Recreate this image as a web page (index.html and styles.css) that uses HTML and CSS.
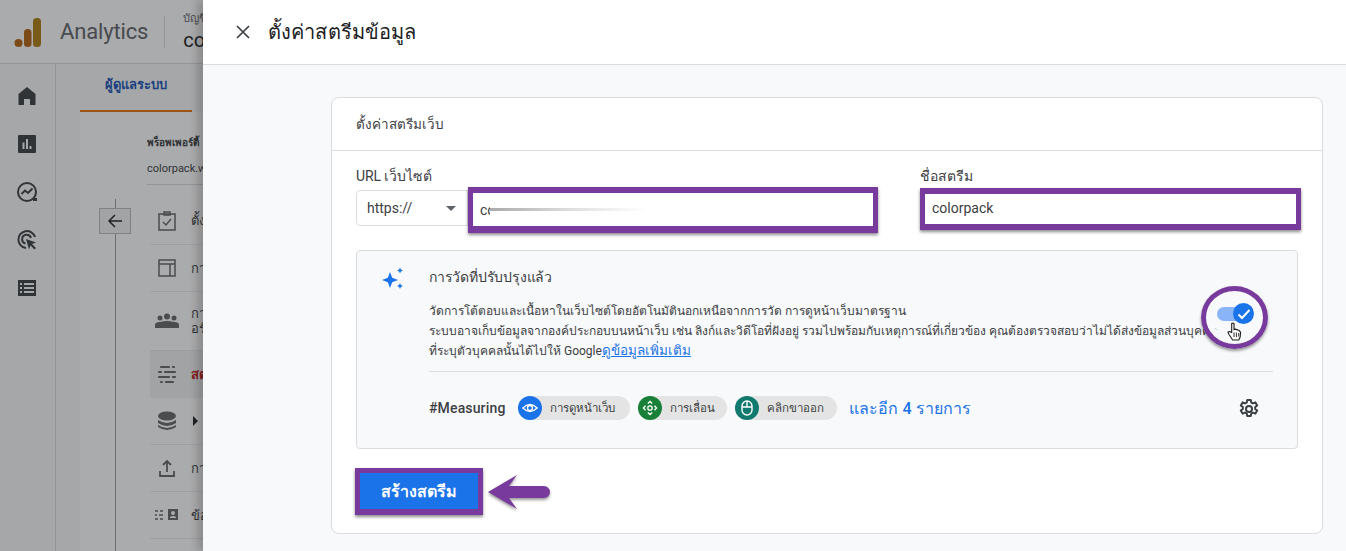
FILE: index.html
```html
<!DOCTYPE html>
<html lang="th">
<head>
<meta charset="utf-8">
<title>ตั้งค่าสตรีมข้อมูล</title>
<link rel="stylesheet" href="styles.css">
</head>
<body>
<div class="app">
  <header class="topbar">
    <svg class="logo" width="28" height="32" viewBox="0 0 28 32"><rect x="19" y="2" width="8" height="29" rx="3.500" fill="#b07d12"/><rect x="10" y="13" width="7.500" height="18" rx="3.500" fill="#b5630f"/><circle cx="4.500" cy="27" r="4" fill="#b5630f"/></svg>
    <span class="brand">Analytics</span>
    <span class="topsep"></span>
    <div class="acct"><span class="acct-label">บัญชี</span><span class="acct-name">colorpack</span></div>
  </header>
  <div class="appbody">
    <nav class="rail">
      <svg class="rail-icon" viewBox="0 0 24 24"><path d="M12 3 3.500 10v11h5.500v-6h6v6h5.500V10z"/></svg>
      <svg class="rail-icon" viewBox="0 0 24 24"><path fill-rule="evenodd" d="M4 3h16a1 1 0 0 1 1 1v16a1 1 0 0 1-1 1H4a1 1 0 0 1-1-1V4a1 1 0 0 1 1-1zm3.500 7.500V17h2v-6.500zm3.500-3.500V17h2V7zm3.500 7v3h2v-3z"/></svg>
      <svg class="rail-icon line" viewBox="0 0 24 24"><circle cx="12" cy="12" r="9"/><path d="m6.500 14 3.500-3.500 3 2.500 4.500-4.500"/><path d="M18 18h4v3h-4z" class="solid"/></svg>
      <svg class="rail-icon line" viewBox="0 0 24 24"><path d="M20 9a8.500 8.500 0 1 0-9 11"/><path d="M16 10a4.500 4.500 0 1 0-5.500 5.500"/><path class="solid" d="m11 11 10 3.500-4 1.500 4 4-1.500 1.500-4-4-1.500 4z"/></svg>
      <svg class="rail-icon" viewBox="0 0 24 24"><path fill-rule="evenodd" d="M3 4h18v16H3zm2 3v2h2V7zm4 0v2h10V7zm-4 4v2h2v-2zm4 0v2h10v-2zm-4 4v2h2v-2zm4 0v2h10v-2z"/></svg>
    </nav>
    <main class="admin">
      <div class="tab">ผู้ดูแลระบบ</div>
      <div class="admin-grid">
        <div class="back-col"><span class="back-line"></span><span class="back-btn"><svg width="18" height="18" viewBox="0 0 18 18"><path d="M16 9H3M9 3 3 9l6 6" fill="none" stroke="#222" stroke-width="1.500"/></svg></span></div>
        <div class="menu">
          <div class="prop-label">พร็อพเพอร์ตี้</div>
          <div class="prop-name">colorpack.website</div>
          <div class="mi mi-first"><svg class="mi-icon" viewBox="0 0 20 20"><path fill="none" stroke="#666" stroke-width="1.500" d="M2 3h16v16H2zM7 1h6v3H7zM6 11l3 3 5-6"/></svg><span>ตั้งค่า</span></div>
          <div class="mi"><svg class="mi-icon" viewBox="0 0 20 20"><path fill="none" stroke="#666" stroke-width="1.500" d="M2 2h16v16H2zM2 6h16M13 6v12"/></svg><span>การ</span></div>
          <div class="mi mi-two"><svg class="mi-icon wide" viewBox="0 0 24 16"><circle cx="5" cy="5" r="2.500" fill="#666"/><circle cx="12" cy="3.500" r="3" fill="#666"/><circle cx="19" cy="5" r="2.500" fill="#666"/><path d="M0 15v-3q0-3 5-3 7-2 14 0 5 0 5 3v3z" fill="#666"/></svg><span>การ<br>อร์</span></div>
          <div class="mi mi-active"><svg class="mi-icon" viewBox="0 0 20 20"><path stroke="#666" stroke-width="2.200" stroke-linecap="round" d="M4 2h8M16 2h1M2 7h2M8 7h10M2 12h10M16 12h2M4 17h1M9 17h7"/></svg><span>สต</span></div>
          <div class="mi mi-noline"><svg class="mi-icon" viewBox="0 0 20 20"><ellipse cx="10" cy="5" rx="9" ry="4.500" fill="#666"/><path d="M1 9q9 6 18 0v3q-9 6-18 0zM1 14q9 6 18 0v2q-9 6-18 0z" fill="#666"/></svg><i class="caret"></i></div>
          <div class="mi"><svg class="mi-icon" viewBox="0 0 20 20"><path fill="none" stroke="#666" stroke-width="1.800" d="M10 14V3M6 7l4-4 4 4M3 13v5h14v-5"/></svg><span>การ</span></div>
          <div class="mi"><svg class="mi-icon wide" viewBox="0 0 24 12"><path stroke="#666" stroke-width="1.500" d="M0 2h3M5 2h3M0 6h2M4 6h4M0 10h3M5 10h3"/><path fill-rule="evenodd" d="M13 0h10v11H13zm5 2a2 2 0 1 0 0 4 2 2 0 0 0 0-4zm-3 7h6V8q-3-2-6 0z" fill="#666"/></svg><span>ข้อ</span></div>
        </div>
      </div>
    </main>
  </div>
</div>
<div class="scrim"></div>

<section class="drawer">
  <header class="dr-head">
    <svg class="close" width="16" height="16" viewBox="0 0 16 16"><path d="M2 2l12 12M14 2 2 14" stroke="#3c4043" stroke-width="1.700"/></svg>
    <h1>ตั้งค่าสตรีมข้อมูล</h1>
  </header>
  <div class="dr-body">
    <div class="card">
      <div class="card-title">ตั้งค่าสตรีมเว็บ</div>
      <div class="fields">
        <div class="field url">
          <label>URL เว็บไซต์</label>
          <div class="url-row">
            <div class="select">https://<i class="arrow"></i></div>
            <div class="hl hl-url">
              <span class="val">co</span><span class="blur"></span>
            </div>
          </div>
        </div>
        <div class="field name">
          <label>ชื่อสตรีม</label>
          <div class="hl hl-name"><span class="val">colorpack</span></div>
        </div>
      </div>

      <div class="measure">
        <div class="m-top">
          <svg class="spark" width="24" height="24" viewBox="0 0 24 24" fill="#1a73e8"><path d="M9 5l2.200 5.800L17 13l-5.800 2.200L9 21l-2.200-5.800L1 13l5.800-2.200z"/><path d="M19 .5l.9 2.100 2.100.9-2.100.9L19 6.500l-.9-2.100-2.100-.9 2.100-.9zM19 16l.9 2.100 2.100.9-2.100.9-.9 2.100-.9-2.100-2.100-.9 2.100-.9z"/></svg>
          <div class="m-text">
            <h2>การวัดที่ปรับปรุงแล้ว</h2>
            <p>วัดการโต้ตอบและเนื้อหาในเว็บไซต์โดยอัตโนมัตินอกเหนือจากการวัด การดูหน้าเว็บมาตรฐาน<br>ระบบอาจเก็บข้อมูลจากองค์ประกอบบนหน้าเว็บ เช่น ลิงก์และวิดีโอที่ฝังอยู่ รวมไปพร้อมกับเหตุการณ์ที่เกี่ยวข้อง คุณต้องตรวจสอบว่าไม่ได้ส่งข้อมูลส่วนบุคคล<br>ที่ระบุตัวบุคคลนั้นได้ไปให้ Google<a href="#">ดูข้อมูลเพิ่มเติม</a></p>
          </div>
          <div class="toggle-ring">
            <span class="track"></span>
            <span class="knob"><svg width="14" height="12" viewBox="0 0 14 12"><path d="M1.500 6.500 5 10l7.500-8" fill="none" stroke="#fff" stroke-width="2"/></svg></span>
            <svg class="hand" width="15" height="19" viewBox="0 0 16 20"><path d="M5 1.500q1.500-1 2.500 0V8l1-.5 2 .5 2.500 1 1.500 2-.5 5-1.500 3H6l-4-6-1-2.500 1.500-.5L5 11z" fill="#fff" stroke="#222" stroke-width="1.200" stroke-linejoin="round"/><path d="M7.500 11v5M10 11v5M12.500 11.500v4" stroke="#222"/></svg>
          </div>
        </div>
        <div class="m-bottom">
          <span class="hash">#Measuring</span>
          <span class="chip chip-a"><span class="chip-ic blue"><svg width="16" height="16" viewBox="0 0 16 16" fill="none" stroke="#fff" stroke-width="1.300"><path d="M.8 8Q8 1 15.200 8 8 15 .8 8z"/><circle cx="8" cy="8" r="2.500"/></svg></span>การดูหน้าเว็บ</span>
          <span class="chip chip-b"><span class="chip-ic green"><svg width="16" height="16" viewBox="0 0 16 16" fill="none" stroke="#fff" stroke-width="1.300"><circle cx="8" cy="8" r="2.200"/><path d="M5.800 3.500 8 1.500l2.200 2M5.800 12.500 8 14.500l2.200-2M3.500 5.800 1.500 8l2 2.200M12.500 5.800l2 2.200-2 2.200"/></svg></span>การเลื่อน</span>
          <span class="chip chip-c"><span class="chip-ic teal"><svg width="16" height="18" viewBox="0 0 16 18" fill="none" stroke="#fff" stroke-width="1.400"><rect x="3" y="2" width="10" height="14" rx="5"/><path d="M3 8h10M8 2v6"/></svg></span>คลิกขาออก</span>
          <a class="more" href="#">และอีก 4 รายการ</a>
          <svg class="gear" width="24" height="24" viewBox="0 0 24 24"><path fill="none" stroke="#3c4043" stroke-width="2" stroke-linejoin="round" d="M10.200 3h3.600l.5 2.600 1.700.8 2.400-1 1.800 3-2 1.700v1.800l2 1.700-1.800 3-2.400-1-1.700.8-.5 2.600h-3.600l-.5-2.600-1.700-.8-2.400 1-1.800-3 2-1.700v-1.800l-2-1.700 1.800-3 2.400 1 1.700-.8z"/><circle cx="12" cy="12" r="3" fill="none" stroke="#3c4043" stroke-width="2"/></svg>
        </div>
      </div>

      <div class="actions">
        <button class="create">สร้างสตรีม</button>
        <svg class="pointer" width="62" height="38" viewBox="0 0 62 38"><path d="M0 19 29 2l-8 11h35a6 6 0 0 1 0 12H21l8 11z" fill="#783a9c"/></svg>
      </div>
    </div>
  </div>
</section>
</body>
</html>
```
FILE: styles.css
```css
*{box-sizing:border-box;margin:0;padding:0}
html,body{height:100%;overflow:hidden}
body{position:relative;width:1346px;height:551px;font-family:Roboto,"Noto Sans",sans-serif;color:#202124;background:#fff}

/* background app */
.app{height:100%;display:flex;flex-direction:column;background:#fff}
.topbar{height:64px;flex:none;display:flex;align-items:center;padding-left:14px;border-bottom:1px solid #dadce0}
.brand{margin-left:18px;font-size:22px;color:#5f6368;letter-spacing:-.15px}
.topsep{width:1px;height:32px;background:#dadce0;margin:0 18px 0 16px}
.acct{display:flex;flex-direction:column;gap:2px}
.acct-label{font-size:11px;color:#5f6368;line-height:14px}
.acct-name{font-size:20px;line-height:24px;white-space:nowrap;color:#202124}
.appbody{flex:1;display:flex;min-height:0}
.rail{width:56px;flex:none;border-right:1px solid #dadce0;display:flex;flex-direction:column;align-items:center;gap:24px;padding-top:20px;padding-right:1px;background:#f8f9fa}
.rail-icon{width:24px;height:24px;fill:#3c4043;flex:none}
.rail-icon.line{fill:none;stroke:#3c4043;stroke-width:2}
.rail-icon .solid{fill:#3c4043;stroke:none}
.admin{flex:1;min-width:0;padding-left:24px;background:#f8f9fa}
.tab{width:112px;height:48px;display:flex;align-items:center;justify-content:center;font-size:13px;font-weight:700;color:#1a56b8;border-bottom:2px solid #e8710a;padding-bottom:5px}
.admin-grid{display:flex;background:#fff;height:440px;overflow:hidden}
.back-col{width:67px;position:relative;display:flex;padding-left:35px;flex:none;background:#fff}
.back-line{width:1px;background:#9aa0a6;margin-top:87px}
.back-btn{position:absolute;left:19px;top:96px;width:32px;height:26px;display:flex;align-items:center;justify-content:center;border:1px solid #bbb;background:#f1f3f4}
.menu{flex:1;min-width:0}
.prop-label{font-size:10px;font-weight:700;line-height:14px;padding-top:24px;white-space:nowrap;color:#3c4043}
.prop-name{font-size:11px;line-height:14px;padding:12px 0 8px;border-bottom:1px solid #dadce0;white-space:nowrap;color:#3c4043}
.mi{height:47px;display:flex;align-items:center;gap:14px;margin-left:3px;padding-left:7px;border-bottom:1px solid #e8eaed;font-size:13px;line-height:15px;white-space:nowrap;color:#3c4043}
.mi-first{margin-top:6px;height:54px;padding-top:6px}
.mi-two{height:59px}
.mi-active{background:#f1f3f4;color:#c5221f;font-weight:700;border-bottom:0}
.mi-icon{width:20px;height:20px;flex:none}
.mi-icon.wide{width:24px;margin:0 -2px}
.caret{width:0;height:0;border-left:5px solid #222;border-top:5px solid transparent;border-bottom:5px solid transparent;margin-left:2px}
.scrim{position:absolute;inset:0;background:rgba(32,33,36,.38)}

/* drawer */
.drawer{position:absolute;left:203px;top:0;right:0;bottom:0;display:flex;flex-direction:column;background:#f8f9fa;box-shadow:-6px 0 8px rgba(0,0,0,.18)}
.dr-head{height:65px;flex:none;display:flex;align-items:center;gap:17px;padding-left:32px;background:#fff;border-bottom:1px solid #dadce0}
.close{flex:none}
.dr-head h1{font-size:20px;font-weight:500;line-height:24px;color:#202124;letter-spacing:.12px}
.dr-body{flex:1;padding:32px 23px 0 128px;min-height:0}
.card{background:#fff;border:1px solid #dadce0;border-radius:8px;height:437px;padding:0 24px}
.card-title{height:53px;margin:0 -24px;padding:0 24px;display:flex;align-items:center;border-bottom:1px solid #dadce0;font-size:13.500px;color:#3c4043}
.fields{display:flex;gap:42px;padding-top:15px}
.field label{display:block;font-size:14px;line-height:20px;color:#3c4043;letter-spacing:-.1px}
.field.url{width:522px}
.field.name{width:381px}
.url-row{display:flex;align-items:flex-start;margin-top:1px}
.select{width:112px;height:36px;flex:none;margin-top:3px;display:flex;align-items:center;justify-content:space-between;padding:0 10px;font-size:14px;color:#3c4043;border:1px solid #dadce0;border-radius:4px 0 0 4px}
.arrow{width:0;height:0;border-left:5px solid transparent;border-right:5px solid transparent;border-top:5px solid #5f6368;margin-right:1px}
.hl{display:flex;align-items:center;background:#fff;border:solid #783a9c;border-width:6px 5px 7px;box-shadow:0 2px 3px rgba(0,0,0,.45);font-size:14px;color:#3c4043}
.hl-url{width:410px;height:46px;padding-left:7px}
.hl-name{width:381px;height:42px;padding:0 0 2px 7px;margin-top:2px;border-bottom-width:6px}
.blur{width:156px;height:14px;margin-left:-5px;background:linear-gradient(90deg,#aaa,#ddd 50%,#fff) center/100% 3px no-repeat #fff}
.measure{margin-top:17px;height:199px;background:#f8f9fa;border:1px solid #dadce0;border-radius:4px;padding:0 24px}
.m-top{height:120px;display:flex;position:relative}
.spark{margin-top:16px;flex:none}
.m-text{margin-left:24px}
.m-text h2{font-size:14px;font-weight:500;line-height:20px;margin-top:16px;color:#3c4043;letter-spacing:-.2px}
.m-text p{font-size:12px;line-height:19.500px;margin-top:15px;color:#3c4043;white-space:nowrap}
.m-text a{color:#1a73e8;font-size:13.500px;text-decoration:underline}
.toggle-ring{position:absolute;left:820px;top:35px;width:67px;height:63px;border:5px solid #783a9c;border-radius:50%;box-shadow:0 2px 3px rgba(0,0,0,.4),inset 0 0 0 6px #f8f9fa}
.track{position:absolute;left:11px;top:16px;width:32px;height:14px;border-radius:7px;background:#8ab4f8}
.knob{position:absolute;left:27px;top:12px;width:21px;height:21px;border-radius:50%;background:#1a73e8;display:flex;align-items:center;justify-content:center}
.hand{position:absolute;left:21px;top:31px}
.m-bottom{margin-left:48px;height:73px;display:flex;align-items:center;border-top:1px solid #dadce0}
.hash{font-size:14px;font-weight:500;color:#3c4043;margin-right:13px;letter-spacing:.15px}
.chip{height:24px;display:flex;align-items:center;gap:8px;background:#e4e4e4;border-radius:12px;margin-right:8px;font-size:11.500px;color:#3c4043;white-space:nowrap}
.chip-a{width:112px}
.chip-b{width:89px}
.chip-c{width:102px}
.chip-ic{width:24px;height:24px;border-radius:50%;display:flex;align-items:center;justify-content:center;flex:none}
.blue{background:#1a73e8}
.green{background:#188038}
.teal{background:#12796f}
.more{margin-left:4px;font-size:16px;font-weight:500;color:#1a73e8;text-decoration:none}
.gear{margin-left:auto;margin-right:12px;position:relative;top:1px}
.actions{display:flex;align-items:center;margin-top:19px;margin-left:-1px;gap:5px}
.create{width:128px;height:47px;background:#1a73e8;color:#fff;border:solid #783a9c;border-width:5px 5px 6px;box-shadow:0 2px 3px rgba(0,0,0,.45);font:700 16px Roboto,"Noto Sans",sans-serif;letter-spacing:-.1px}
.pointer{flex:none;filter:drop-shadow(0 2px 1.500px rgba(0,0,0,.4))}
```
